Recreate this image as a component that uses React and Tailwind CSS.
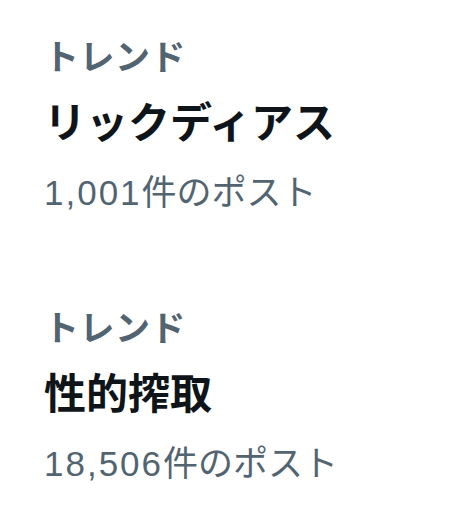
export default function App() {
  const items = [
    { label: "トレンド", title: "リックディアス", num: "1,001", rest: "件のポスト" },
    { label: "トレンド", title: "性的搾取", num: "18,506", rest: "件のポスト" },
  ];
  return (
    <div
      className="w-[454px] h-[524px] bg-white flex flex-col gap-[68px] pl-[44px] pt-[25px]"
      style={{ fontFamily: '"Noto Sans CJK JP", "Noto Sans", sans-serif' }}
    >
      {items.map((it, i) => (
        <div key={i} className="flex flex-col">
          <div className="text-[35px] leading-[60px] font-bold text-[#536471] tracking-[0.5px]">{it.label}</div>
          <div className="text-[42px] leading-[70px] font-bold text-[#0f1419]">{it.title}</div>
          <div className="text-[35px] leading-[70px] text-[#536471]">
            <span className="tracking-[2px]" style={{ fontFamily: '"Liberation Sans", "Noto Sans CJK JP", sans-serif' }}>{it.num}</span>
            <span>{it.rest}</span>
          </div>
        </div>
      ))}
    </div>
  );
}
